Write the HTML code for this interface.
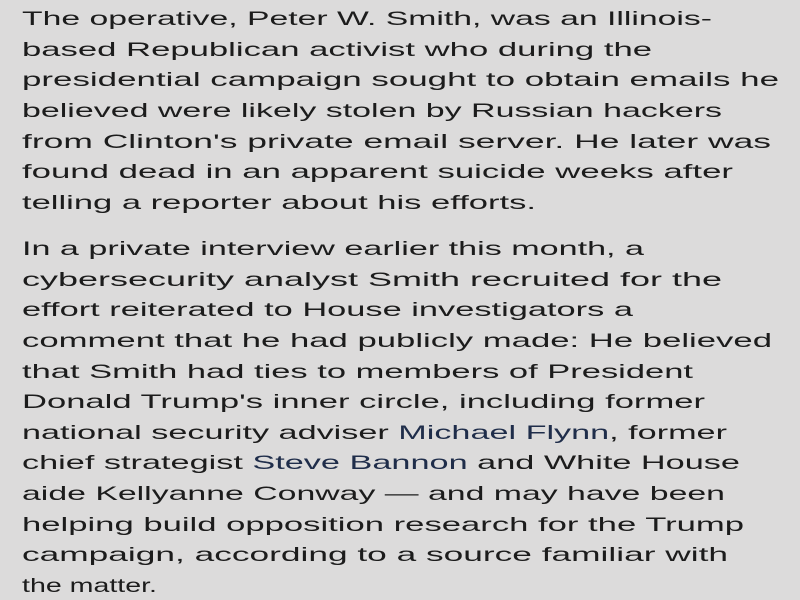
<!DOCTYPE html>
<html><head><meta charset="utf-8"><style>
html,body{margin:0;padding:0;background:#dcdbdb;width:800px;height:600px;overflow:hidden}
svg{display:block}
text{font-family:"Liberation Sans",sans-serif;font-size:19.5px;fill:#1c1c1c}
.l{fill:#1f2d4a}
</style></head><body>
<svg width="800" height="600" xmlns="http://www.w3.org/2000/svg">
<text x="22" y="25" textLength="690" lengthAdjust="spacingAndGlyphs">The operative, Peter W. Smith, was an Illinois-</text>
<text x="22" y="56" textLength="630" lengthAdjust="spacingAndGlyphs">based Republican activist who during the</text>
<text x="22" y="86" textLength="757" lengthAdjust="spacingAndGlyphs">presidential campaign sought to obtain emails he</text>
<text x="22" y="117" textLength="700" lengthAdjust="spacingAndGlyphs">believed were likely stolen by Russian hackers</text>
<text x="22" y="148" textLength="749" lengthAdjust="spacingAndGlyphs">from Clinton's private email server. He later was</text>
<text x="22" y="178" textLength="711" lengthAdjust="spacingAndGlyphs">found dead in an apparent suicide weeks after</text>
<text x="22" y="209" textLength="514" lengthAdjust="spacingAndGlyphs">telling a reporter about his efforts.</text>
<text x="22" y="255" textLength="622" lengthAdjust="spacingAndGlyphs">In a private interview earlier this month, a</text>
<text x="22" y="286" textLength="700" lengthAdjust="spacingAndGlyphs">cybersecurity analyst Smith recruited for the</text>
<text x="22" y="316" textLength="611" lengthAdjust="spacingAndGlyphs">effort reiterated to House investigators a</text>
<text x="22" y="347" textLength="750" lengthAdjust="spacingAndGlyphs">comment that he had publicly made: He believed</text>
<text x="22" y="378" textLength="671" lengthAdjust="spacingAndGlyphs">that Smith had ties to members of President</text>
<text x="22" y="408" textLength="683" lengthAdjust="spacingAndGlyphs">Donald Trump's inner circle, including former</text>
<text x="22" y="439" textLength="705" lengthAdjust="spacingAndGlyphs">national security adviser <tspan class="l">Michael Flynn</tspan>, former</text>
<text x="22" y="469" textLength="718" lengthAdjust="spacingAndGlyphs">chief strategist <tspan class="l">Steve Bannon</tspan> and White House</text>
<text x="22" y="500" textLength="703" lengthAdjust="spacingAndGlyphs">aide Kellyanne Conway — and may have been</text>
<text x="22" y="531" textLength="722" lengthAdjust="spacingAndGlyphs">helping build opposition research for the Trump</text>
<text x="22" y="561" textLength="706" lengthAdjust="spacingAndGlyphs">campaign, according to a source familiar with</text>
<text x="22" y="592" textLength="135" lengthAdjust="spacingAndGlyphs">the matter.</text>
</svg>
</body></html>
